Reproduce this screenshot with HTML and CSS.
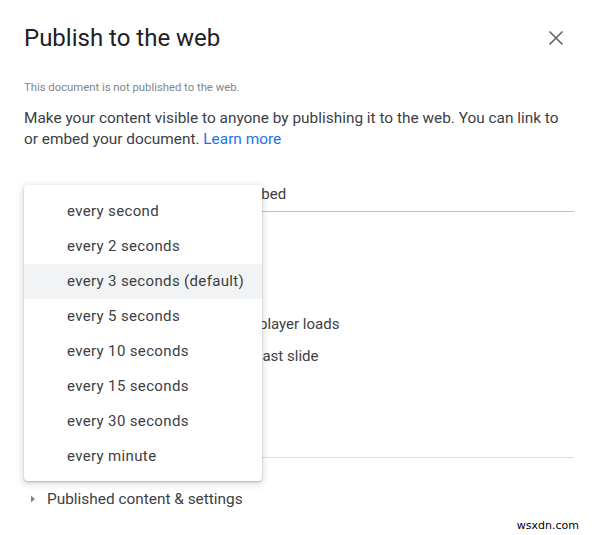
FILE: index.html
```html
<!DOCTYPE html>
<html>
<head>
<meta charset="utf-8">
<link rel="stylesheet" href="styles.css">
</head>
<body>
<div class="dialog">
  <div class="header">
    <div class="title">Publish to the web</div>
    <svg class="close" width="24" height="24" viewBox="0 0 24 24"><path d="M5.5 5.5L18.5 18.5M18.5 5.5L5.5 18.5" stroke="#5f6368" stroke-width="1.6" fill="none"/></svg>
  </div>
  <div class="status">This document is not published to the web.</div>
  <p class="desc">Make your content visible to anyone by publishing it to the web. You can link to or embed your document. <a class="learn">Learn more</a></p>
  <div class="tabs">
    <div class="tab active">Link</div>
    <div class="tab">Embed</div>
  </div>
  <div class="panel">
    <div class="label">Auto-advance slides:</div>
    <div class="select">every 3 seconds (default)</div>
    <div class="checks">
      <div class="check-row"><span class="box"></span><span class="ctext">Start slideshow as soon as the player loads</span></div>
      <div class="check-row"><span class="box"></span><span class="ctext">Restart the slideshow after the last slide</span></div>
    </div>
    <div class="btn">Publish</div>
  </div>
  <div class="divider"></div>
  <div class="details">
    <svg class="caret" width="8" height="10" viewBox="0 0 8 10"><path d="M2 1.5L6 5 2 8.5z" fill="#80868b"/></svg>
    <span>Published content &amp; settings</span>
  </div>

  <div class="menu">
    <div class="item">every second</div>
    <div class="item">every 2 seconds</div>
    <div class="item hl">every 3 seconds (default)</div>
    <div class="item">every 5 seconds</div>
    <div class="item">every 10 seconds</div>
    <div class="item">every 15 seconds</div>
    <div class="item">every 30 seconds</div>
    <div class="item">every minute</div>
  </div>
</div>
<div class="watermark">wsxdn.com</div>
</body>
</html>
```
FILE: styles.css
```css
html, body {
  margin: 0;
  padding: 0;
  background: #fff;
}
body {
  width: 592px;
  height: 535px;
  position: relative;
  overflow: hidden;
  font-family: Roboto, "Noto Sans", sans-serif;
  color: #3c4043;
}
.dialog {
  position: relative;
  padding: 24px 18px 0 24px;
}
.header {
  display: flex;
  justify-content: space-between;
  align-items: center;
  height: 28px;
}
.title {
  font-size: 24px;
  line-height: 28px;
  color: #202124;
}
.close {
  margin-right: 6px;
  display: block;
}
.status {
  margin-top: 28px;
  font-size: 11.3px;
  line-height: 16px;
  color: #80868b;
}
.desc {
  margin: 12px 0 0;
  font-size: 15.4px;
  line-height: 21px;
  color: #3c4043;
  padding-right: 8px;
}
.learn {
  color: #1a73e8;
}
.tabs {
  margin-top: 27px;
  display: flex;
  height: 34px;
  border-bottom: 1px solid #bdc1c6;
  width: 550px;
}
.tab {
  font-size: 15px;
  line-height: 34px;
  padding: 0 20px;
  color: #3c4043;
}
.tab.active {
  color: #1a73e8;
}
.tab + .tab {
  margin-left: 128px;
}
.panel {
  padding-top: 16px;
  font-size: 15px;
}
.label {
  line-height: 20px;
}
.select {
  margin-top: 8px;
  height: 36px;
  line-height: 36px;
  width: 200px;
  padding-left: 8px;
}
.checks {
  margin-top: 16px;
}
.check-row {
  display: flex;
  align-items: center;
  height: 32px;
}
.box {
  width: 14px;
  height: 14px;
  border: 2px solid #5f6368;
  border-radius: 2px;
  margin-right: 9px;
}
.ctext {
  line-height: 20px;
}
.btn {
  margin-top: 16px;
  width: 80px;
  height: 36px;
  background: #1a73e8;
  color: #fff;
  line-height: 36px;
  text-align: center;
  border-radius: 4px;
}
.divider {
  margin-top: 33px;
  width: 550px;
  border-top: 1px solid #dadce0;
}
.details {
  margin-top: 31px;
  display: flex;
  align-items: center;
  font-size: 15.4px;
  line-height: 20px;
  color: #3c4043;
}
.caret {
  margin: 0 10px 0 5px;
}
.menu {
  position: absolute;
  left: 24px;
  top: 185px;
  width: 238px;
  padding: 9px 0 7px;
  background: #fff;
  border-radius: 4px;
  box-shadow: 0 2px 6px 2px rgba(60,64,67,0.15), 0 1px 2px rgba(60,64,67,0.3);
}
.item {
  height: 35px;
  line-height: 35px;
  padding-left: 43px;
  font-size: 15px;
  color: #3c4043;
  letter-spacing: 0.35px;
}
.item.hl {
  background: #f1f3f4;
}
.watermark {
  position: absolute;
  right: 13px;
  bottom: 3px;
  font-family: "DejaVu Sans", sans-serif;
  font-size: 11px;
  color: #000;
}
```
